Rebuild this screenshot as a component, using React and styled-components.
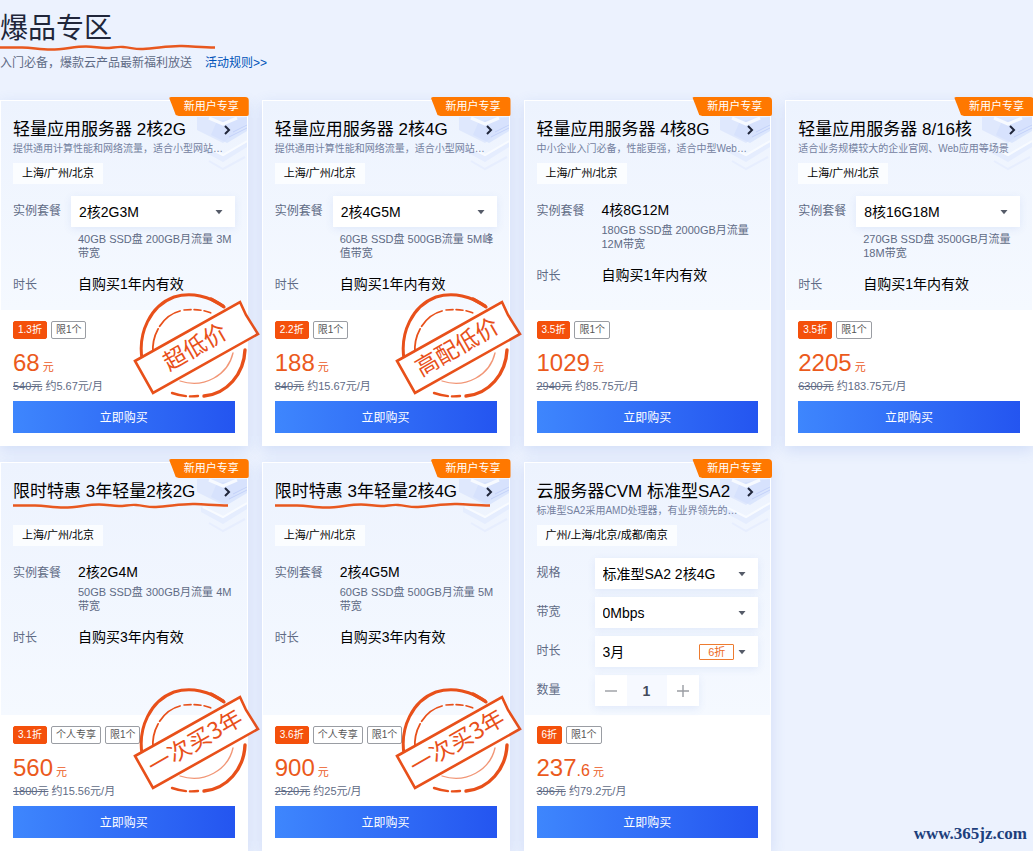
import { useState } from "react";
import styled, { createGlobalStyle } from "styled-components";

/* CSS */
const GlobalStyle = createGlobalStyle`
  * {
    box-sizing: border-box;
  }
  body {
    margin: 0;
    background: #ecf2fe;
    color: #000;
    font-family: "Liberation Sans", "Noto Sans CJK SC", sans-serif;
    font-size: 14px;
  }
  button, select, input {
    font-family: inherit;
  }
`;
const Page = styled.main`
  position: relative;
  padding-top: 9px;
`;
const Heading = styled.h1`
  position: relative;
  margin: 0;
  color: #20263a;
  font-size: 28px;
  font-weight: 400;
  line-height: 40px;
`;
const Intro = styled.p`
  display: flex;
  gap: 13px;
  margin: 4px 0 27px;
  color: #5f6b85;
  font-size: 12px;
  line-height: 20px;
`;
const RuleLink = styled.a`
  color: #0052b8;
  text-decoration: none;
`;
const Wave = styled.svg`
  position: absolute;
  left: 0;
  bottom: ${({ $bottom }) => $bottom}px;
  width: 216px;
  height: 8px;
`;
const CardGrid = styled.section`
  display: grid;
  grid-template-columns: repeat(4, minmax(0, 1fr));
  gap: 16px 14px;
`;
const Card = styled.article`
  position: relative;
  display: flex;
  flex-direction: column;
  background: #fff;
  box-shadow: 0 4px 14px rgba(70, 110, 210, 0.16);
`;
const CardTop = styled.div`
  position: relative;
  flex: 1;
  padding: 17px 12px 9px;
  border: 1px solid #fff;
  border-bottom: 0;
  background: linear-gradient(#edf3fe, #f5f9ff);
`;
const Decor = styled.svg`
  position: absolute;
  top: 14px;
  right: 0;
  width: 56px;
  height: 62px;
`;
const Ribbon = styled.span`
  position: absolute;
  z-index: 1;
  top: -3px;
  right: -1px;
  padding: 0 10px 0 15px;
  border-radius: 2px 4px 2px 2px;
  background: #ff7800;
  clip-path: polygon(0 0, 100% 0, 100% 100%, 10px 100%, 7px 95%, 3px 40%);
  color: #fff;
  font-size: 11px;
  line-height: 19px;
`;
const CardTitle = styled.h2`
  position: relative;
  margin: 0;
  font-size: 17px;
  font-weight: 400;
  line-height: 24px;
`;
const TitleLink = styled.a`
  display: flex;
  align-items: center;
  justify-content: space-between;
  color: #000;
  text-decoration: none;
  white-space: nowrap;
`;
const Desc = styled.p`
  position: relative;
  min-height: 14px;
  margin: 0 0 7px;
  color: #7481a0;
  font-size: 10px;
  line-height: 14px;
  white-space: nowrap;
`;
const Region = styled.span`
  display: block;
  width: fit-content;
  padding: 0 9px;
  background: #fbfdff;
  font-size: 11px;
  line-height: 21px;
`;
const Specs = styled.div`
  display: grid;
  gap: ${({ $gap }) => $gap}px;
  margin-top: 12px;
`;
const Row = styled.div`
  display: grid;
  grid-template-columns: 58px minmax(0, 1fr);
  align-items: start;
  min-height: 31px;
`;
const Label = styled.label`
  color: #5f6b85;
  font-size: 12px;
  line-height: 30px;
`;
const PlainValue = styled.div`
  padding: 4px 0 0 7px;
  line-height: 20px;
`;
const Detail = styled.div`
  padding: ${({ $below }) => $below}px 0 0 7px;
  color: #5f6b85;
  font-size: 11px;
  line-height: 14px;
  white-space: nowrap;
`;
const SelectBox = styled.div`
  position: relative;
`;
const Select = styled.select`
  display: block;
  width: 100%;
  height: 31px;
  padding: 0 8px;
  border: 0;
  border-radius: 0;
  appearance: none;
  background: #fff;
  box-shadow: 0 2px 8px rgba(70, 110, 210, 0.1);
  color: #000;
  font-size: 14px;
`;
const Caret = styled.svg`
  position: absolute;
  top: 14px;
  right: 12px;
  width: 8px;
  height: 5px;
  pointer-events: none;
`;
const SelectTag = styled.span`
  position: absolute;
  top: 8px;
  right: 24px;
  width: 35px;
  border: 1px solid #ed7b2f;
  border-radius: 1px;
  color: #ed6b1f;
  font-size: 11px;
  line-height: 14px;
  text-align: center;
  pointer-events: none;
`;
const Stepper = styled.div`
  display: flex;
  width: fit-content;
  box-shadow: 0 3px 8px rgba(70, 110, 210, 0.1);
`;
const StepButton = styled.button`
  display: grid;
  place-items: center;
  width: 32px;
  height: 31px;
  padding: 0;
  border: 0;
  background: #fff;
`;
const StepInput = styled.input`
  width: 40px;
  height: 31px;
  padding: 0;
  border: 0;
  background: #f6f9ff;
  color: #444b5c;
  font-size: 14px;
  font-weight: 700;
  text-align: center;
`;
const CardBottom = styled.div`
  padding: 11px 13px 13px;
`;
const Badges = styled.div`
  display: flex;
  gap: 4px;
  height: 18px;
  margin-bottom: 9px;
`;
const Badge = styled.span`
  padding: 0 4px;
  border: 1px solid ${({ $solid }) => ($solid ? "#f4500b" : "#9a9da3")};
  border-radius: 2px;
  background: ${({ $solid }) => ($solid ? "#f4500b" : "#fff")};
  color: ${({ $solid }) => ($solid ? "#fff" : "#555")};
  font-size: 10px;
  line-height: 16px;
  white-space: nowrap;
`;
const Price = styled.div`
  height: 30px;
  color: #eb5a1c;
  font-size: 11px;
  line-height: 30px;
`;
const PriceNumber = styled.span`
  font-size: 24px;
`;
const PriceDecimal = styled.span`
  font-size: 16px;
`;
const OldPrice = styled.div`
  height: 16px;
  margin-bottom: 7px;
  color: #5f6b85;
  font-size: 11px;
  line-height: 16px;
`;
const BuyButton = styled.button`
  display: block;
  width: 100%;
  height: 32px;
  padding: 0 0 2px;
  border: 0;
  background: linear-gradient(90deg, #3e86fd, #2455f0);
  color: #fff;
  font-size: 12px;
`;
const StampSvg = styled.svg`
  position: absolute;
  right: -12px;
  bottom: ${({ $raised }) => ($raised ? 57 : 47)}px;
  width: 128px;
  height: 106px;
  pointer-events: none;
`;
const SiteMark = styled.span`
  position: absolute;
  right: 6px;
  bottom: 6px;
  color: #1d3f7c;
  font: 700 17px/22px "Liberation Serif", serif;
`;

const region = "上海/广州/北京";
const products = [
  {
    title: "轻量应用服务器 2核2G",
    desc: "提供通用计算性能和网络流量，适合小型网站…",
    region,
    specs: [
      { label: "实例套餐", select: "2核2G3M", detail: ["40GB SSD盘 200GB月流量 3M", "带宽"] },
      { label: "时长", value: "自购买1年内有效" },
    ],
    badges: ["1.3折", "限1个"],
    price: "68",
    old: "540元",
    monthly: "约5.67元/月",
    stamp: "超低价",
  },
  {
    title: "轻量应用服务器 2核4G",
    desc: "提供通用计算性能和网络流量，适合小型网站…",
    region,
    specs: [
      { label: "实例套餐", select: "2核4G5M", detail: ["60GB SSD盘 500GB流量 5M峰", "值带宽"] },
      { label: "时长", value: "自购买1年内有效" },
    ],
    badges: ["2.2折", "限1个"],
    price: "188",
    old: "840元",
    monthly: "约15.67元/月",
    stamp: "高配低价",
  },
  {
    title: "轻量应用服务器 4核8G",
    desc: "中小企业入门必备，性能更强，适合中型Web…",
    region,
    specs: [
      { label: "实例套餐", value: "4核8G12M", detail: ["180GB SSD盘 2000GB月流量", "12M带宽"] },
      { label: "时长", value: "自购买1年内有效" },
    ],
    badges: ["3.5折", "限1个"],
    price: "1029",
    old: "2940元",
    monthly: "约85.75元/月",
  },
  {
    title: "轻量应用服务器 8/16核",
    desc: "适合业务规模较大的企业官网、Web应用等场景",
    region,
    specs: [
      { label: "实例套餐", select: "8核16G18M", detail: ["270GB SSD盘 3500GB月流量", "18M带宽"] },
      { label: "时长", value: "自购买1年内有效" },
    ],
    badges: ["3.5折", "限1个"],
    price: "2205",
    old: "6300元",
    monthly: "约183.75元/月",
  },
  {
    title: "限时特惠 3年轻量2核2G",
    underlined: true,
    region,
    specs: [
      { label: "实例套餐", value: "2核2G4M", detail: ["50GB SSD盘 300GB月流量 4M", "带宽"] },
      { label: "时长", value: "自购买3年内有效" },
    ],
    badges: ["3.1折", "个人专享", "限1个"],
    price: "560",
    old: "1800元",
    monthly: "约15.56元/月",
    stamp: "一次买3年",
  },
  {
    title: "限时特惠 3年轻量2核4G",
    underlined: true,
    region,
    specs: [
      { label: "实例套餐", value: "2核4G5M", detail: ["60GB SSD盘 500GB月流量 5M", "带宽"] },
      { label: "时长", value: "自购买3年内有效" },
    ],
    badges: ["3.6折", "个人专享", "限1个"],
    price: "900",
    old: "2520元",
    monthly: "约25元/月",
    stamp: "一次买3年",
  },
  {
    title: "云服务器CVM 标准型SA2",
    desc: "标准型SA2采用AMD处理器，有业界领先的…",
    region: "广州/上海/北京/成都/南京",
    gap: 8,
    specs: [
      { label: "规格", select: "标准型SA2 2核4G" },
      { label: "带宽", select: "0Mbps" },
      { label: "时长", select: "3月", tag: "6折" },
      { label: "数量", stepper: true },
    ],
    badges: ["6折", "限1个"],
    price: "237",
    decimal: ".6",
    old: "396元",
    monthly: "约79.2元/月",
  },
];

const Underline = ({ bottom }) => (
  <Wave $bottom={bottom} viewBox="0 0 216 8" fill="none" aria-hidden="true">
    <path
      d="M0 3.5H22C34 4 40 5.5 51 5.5C64 5.5 74 2.5 86 2.5C94 2.5 99 4 106 4C112 4 117 2.5 123 3C131 3.5 135 5.5 143 5C156 4.5 169 1.5 182 2C195 2.5 203 3.5 215 3.5"
      stroke="#e8581f"
      strokeWidth="2.4"
    />
  </Wave>
);

const Stamp = ({ text, raised }) => (
  <StampSvg $raised={raised} viewBox="0 0 128 106" fill="none">
    <g stroke="#e8501a" strokeLinecap="round">
      <path d="M10 66C6 40 18 13 42 4C59 -1 78 3 92 14" strokeWidth="3" />
      <path d="M79 6L91 13" strokeWidth="3.4" />
      <path d="M113 57C112 81 95 101 72 103" strokeWidth="3.4" />
      <path d="M66 103C57 104 49 103 40 100" strokeWidth="2.4" strokeDasharray="8 4 16 2" />
      <path d="M21 61C19 40 32 22 48 18" strokeWidth="1.8" strokeDasharray="26 3 30" />
      <path d="M52 17C64 16 74 17 81 21" strokeWidth="1.6" strokeDasharray="7 3" />
      <path d="M101 60C96 82 72 96 48 88" strokeWidth="1.3" opacity="0.6" />
      <path d="M3 68L108 9L114 22L126 41L21 100Z" fill="#fff" strokeWidth="2.6" strokeLinejoin="miter" />
    </g>
    <text
      transform="translate(63 54) rotate(-30)"
      y="8"
      textAnchor="middle"
      fill="#e8501a"
      fontSize="23"
      fontFamily="'Noto Sans CJK SC', sans-serif"
    >
      {text}
    </text>
  </StampSvg>
);

const QuantityStepper = ({ id }) => {
  const [count, setCount] = useState(1);

  return (
    <Stepper>
      <StepButton type="button" aria-label="减少" onClick={() => setCount(Math.max(1, count - 1))}>
        <svg width="12" height="12" stroke="#9a9da3" strokeWidth="1.4">
          <path d="M0 6H12" />
        </svg>
      </StepButton>
      <StepInput id={id} value={count} onChange={(e) => setCount(Number(e.target.value) || 1)} />
      <StepButton type="button" aria-label="增加" onClick={() => setCount(count + 1)}>
        <svg width="12" height="12" stroke="#9a9da3" strokeWidth="1.4">
          <path d="M0 6H12M6 0V12" />
        </svg>
      </StepButton>
    </Stepper>
  );
};

const SpecRow = ({ spec, id }) => {
  const { label, select, value, detail, tag, stepper } = spec;

  return (
    <Row>
      <Label as={value ? "span" : "label"} htmlFor={value ? undefined : id}>
        {label}
      </Label>
      <div>
        {select && (
          <SelectBox>
            <Select id={id}>
              <option>{select}</option>
            </Select>
            {tag && <SelectTag>{tag}</SelectTag>}
            <Caret viewBox="0 0 8 5">
              <path d="M0.5 0H7.5L4 4.2Z" fill="#555b68" />
            </Caret>
          </SelectBox>
        )}
        {value && <PlainValue>{value}</PlainValue>}
        {stepper && <QuantityStepper id={id} />}
        {detail && (
          <Detail $below={select ? 5 : 3}>
            {detail[0]}
            <br />
            {detail[1]}
          </Detail>
        )}
      </div>
    </Row>
  );
};

const ProductCard = ({ product, index }) => (
  <Card>
    <Ribbon>新用户专享</Ribbon>
    <CardTop>
      <Decor viewBox="0 0 56 62" aria-hidden="true">
        <path d="M6 2H56V8L32 28L6 15Z" fill="#dfe8fd" />
        <path d="M26 6L56 2V16L36 28L20 20Z" fill="#d3dffc" opacity="0.7" />
        <path d="M18 3L32 9L46 3" fill="none" stroke="#f7faff" strokeWidth="3" />
        <path d="M38 22L56 13M42 17L56 10" stroke="#c3d1f9" />
        <path d="M10 30L32 41L56 27V32L32 47L10 35Z" fill="#e5edfe" />
        <path d="M12 30L32 40L56 26" fill="none" stroke="#f8fbff" strokeWidth="2" />
        <path d="M18 46L32 54L54 42" fill="none" stroke="#e7eefe" strokeWidth="2" />
      </Decor>
      <CardTitle>
        <TitleLink href="#buy">
          {product.title}
          <svg width="16" height="16" fill="none" stroke="#20263a" strokeWidth="2">
            <path d="M6 4L10 8L6 12" />
          </svg>
        </TitleLink>
        {product.underlined && <Underline bottom={-6} />}
      </CardTitle>
      <Desc>{product.desc}</Desc>
      <Region>{product.region}</Region>
      <Specs $gap={product.gap || 10}>
        {product.specs.map((spec, i) => (
          <SpecRow key={spec.label} spec={spec} id={`spec-${index}-${i}`} />
        ))}
      </Specs>
    </CardTop>
    <CardBottom>
      <Badges>
        {product.badges.map((badge, i) => (
          <Badge key={badge} $solid={i === 0}>
            {badge}
          </Badge>
        ))}
      </Badges>
      <Price>
        <PriceNumber>{product.price}</PriceNumber>
        {product.decimal && <PriceDecimal>{product.decimal}</PriceDecimal>} 元
      </Price>
      <OldPrice>
        <del>{product.old}</del> {product.monthly}
      </OldPrice>
      <BuyButton type="button">立即购买</BuyButton>
    </CardBottom>
    {product.stamp && <Stamp text={product.stamp} raised={product.underlined} />}
  </Card>
);

export default function App() {
  return (
    <Page>
      <GlobalStyle />
      <Heading>
        爆品专区
        <Underline bottom={-3} />
      </Heading>
      <Intro>
        入门必备，爆款云产品最新福利放送
        <RuleLink href="#rules">活动规则&gt;&gt;</RuleLink>
      </Intro>
      <CardGrid>
        {products.map((product, i) => (
          <ProductCard key={product.title} product={product} index={i} />
        ))}
      </CardGrid>
      <SiteMark>www.365jz.com</SiteMark>
    </Page>
  );
}
